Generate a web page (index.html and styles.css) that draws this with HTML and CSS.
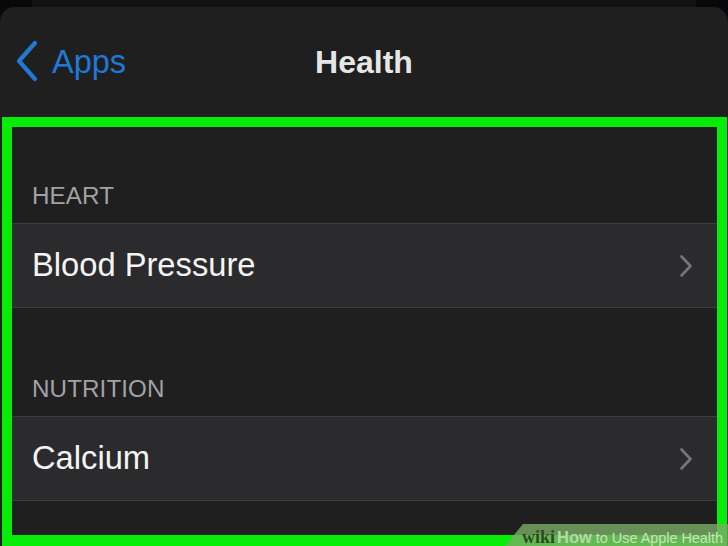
FILE: index.html
```html
<!DOCTYPE html>
<html>
<head>
<meta charset="utf-8">
<link rel="stylesheet" href="styles.css">
</head>
<body>
<div class="screen">
  <div class="top-strip"><div class="behind-sheet"></div></div>
  <div class="sheet">
    <div class="nav">
      <div class="back">
        <svg class="back-chev" width="24" height="42" viewBox="0 0 24 42">
          <polyline points="20,3 4,21 20,39" fill="none" stroke="#2178d6" stroke-width="4.2" stroke-linecap="round" stroke-linejoin="round"/>
        </svg>
        <span class="back-label">Apps</span>
      </div>
      <div class="title">Health</div>
    </div>
    <div class="frame">
      <div class="section-head head-first">HEART</div>
      <div class="row">
        <span class="row-label">Blood Pressure</span>
        <svg class="chev" width="14" height="24" viewBox="0 0 14 24">
          <polyline points="2.5,2.5 11.5,12 2.5,21.5" fill="none" stroke="#76767a" stroke-width="2.6" stroke-linecap="round" stroke-linejoin="round"/>
        </svg>
      </div>
      <div class="section-head">NUTRITION</div>
      <div class="row">
        <span class="row-label">Calcium</span>
        <svg class="chev" width="14" height="24" viewBox="0 0 14 24">
          <polyline points="2.5,2.5 11.5,12 2.5,21.5" fill="none" stroke="#76767a" stroke-width="2.6" stroke-linecap="round" stroke-linejoin="round"/>
        </svg>
      </div>
      <div class="filler"></div>
    </div>
  </div>
  <div class="watermark"><span class="wm-wiki">wiki</span><span class="wm-how">How</span> <span class="wm-rest">to Use Apple Health</span></div>
</div>
</body>
</html>
```
FILE: styles.css
```css
html, body {
  margin: 0;
  padding: 0;
  background: #09090b;
}
.screen {
  position: relative;
  width: 728px;
  height: 546px;
  overflow: hidden;
  font-family: "Liberation Sans", Arial, sans-serif;
  display: flex;
  flex-direction: column;
}
.top-strip {
  height: 7px;
  display: flex;
  background: #08080a;
}
.behind-sheet {
  flex: 1;
  margin: 0 32px;
  background: #131315;
}
.sheet {
  flex: 1;
  background: #1f1f1f;
  border-radius: 15px 15px 0 0;
  display: flex;
  flex-direction: column;
}
.nav {
  height: 110px;
  display: flex;
  align-items: center;
  justify-content: center;
  position: relative;
}
.back {
  position: absolute;
  left: 15px;
  top: 0;
  bottom: 0;
  display: flex;
  align-items: center;
  gap: 13px;
}
.back-chev {
  margin-top: -3px;
}
.back-label {
  color: #2178d6;
  font-size: 32.5px;
  line-height: 1;
}
.title {
  color: #e6e6e6;
  font-size: 32px;
  font-weight: bold;
  line-height: 1;
}
.frame {
  flex: 1;
  margin: 0 1px 0 2px;
  border: 10px solid #06ec06;
  border-bottom-width: 11px;
  background: #1f1f1f;
  display: flex;
  flex-direction: column;
}
.section-head {
  height: 108px;
  box-sizing: border-box;
  display: flex;
  align-items: flex-end;
  padding: 0 0 15px 20px;
  color: #a2a2a6;
  font-size: 24.2px;
  line-height: 1;
  letter-spacing: 0.1px;
}
.section-head.head-first {
  height: 96px;
}
.row {
  height: 85px;
  box-sizing: border-box;
  border-top: 1px solid #3e3e41;
  border-bottom: 1px solid #3e3e41;
  background: #2b2b2d;
  display: flex;
  align-items: center;
  justify-content: space-between;
  padding: 0 24px 0 20px;
}
.row-label {
  color: #f4f4f4;
  font-size: 32.7px;
  line-height: 1;
}
.chev {
  margin-top: 1px;
}
.filler {
  flex: 1;
}
.watermark {
  position: absolute;
  right: 0;
  bottom: 0;
  width: 223px;
  height: 22px;
  background: rgba(122, 172, 100, 0.8);
  clip-path: polygon(18px 0, 100% 0, 100% 100%, 0 100%);
  box-sizing: border-box;
  padding: 4px 0 0 17px;
  white-space: nowrap;
  line-height: 18px;
  font-size: 14.4px;
  color: #c8e4bc;
}
.wm-wiki {
  font-family: "Liberation Serif", "Times New Roman", serif;
  font-weight: bold;
  font-size: 18px;
  color: #2a4b1e;
}
.wm-how {
  font-weight: bold;
  font-size: 16.5px;
  color: #b4d8a6;
  margin-left: 2px;
}
.wm-rest {
  font-size: 14.4px;
  color: #c8e4bc;
}
```
